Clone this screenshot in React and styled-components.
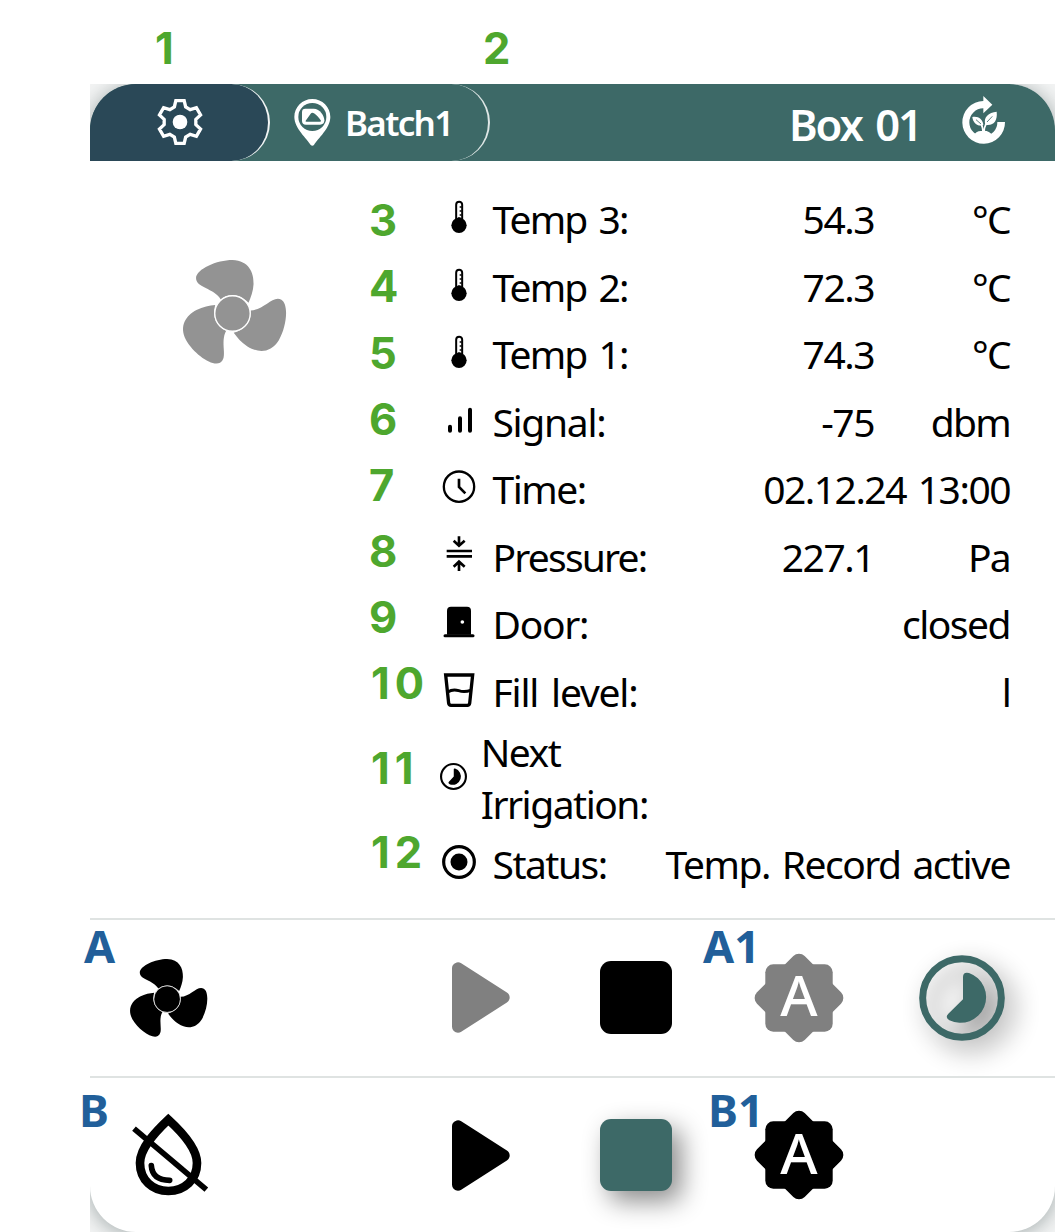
import React from 'react';
import styled, { createGlobalStyle } from 'styled-components';

const TEAL = '#3d6967';

const GlobalStyle = createGlobalStyle`
  *, *::before, *::after { box-sizing: border-box; }
  body {
    margin: 0;
    background: #fff;
    color: #000;
    font-family: "Noto Sans", "Open Sans", sans-serif;
    overflow: hidden;
  }
  svg { display: block; overflow: visible; }
`;

const Page = styled.div`
  position: relative;
  width: 1055px;
  height: 1232px;
  padding: 84px 0 0 90px;
  overflow: hidden;
`;

const Backdrop = styled.div`
  height: 1148px;
  overflow: hidden;
  background: #f3f4f4;
`;

const Card = styled.main`
  display: flex;
  flex-direction: column;
  height: 1148px;
  border-radius: 46px;
  overflow: hidden;
  background: #fff;
  box-shadow: 0 2px 18px 2px rgba(40, 62, 62, 0.34);
`;

const Header = styled.header`
  display: flex;
  flex: none;
  height: 77px;
  background: ${TEAL};
  color: #fff;
`;

const Tabs = styled.div`
  display: flex;
  width: 400px;
  border-right: 2px solid #dfe7e6;
  border-radius: 0 39px 39px 0;
`;

const SettingsTab = styled.div`
  display: flex;
  align-items: center;
  justify-content: center;
  width: 180px;
  padding: 0 0 1px 2px;
  background: #2a4857;
  border-right: 2px solid #f2f5f5;
  border-radius: 0 39px 39px 0;
`;

const BatchTab = styled.div`
  display: flex;
  align-items: center;
  gap: 14px;
  padding-left: 24px;
`;

const BatchName = styled.span`
  padding-top: 1px;
  font-size: 35px;
  font-weight: 600;
  letter-spacing: -1.7px;
  line-height: 48px;
  white-space: nowrap;
`;

const BoxTitle = styled.div`
  display: flex;
  flex: 1;
  align-items: center;
  justify-content: flex-end;
  gap: 41px;
  padding: 0 50px 5px 0;
`;

const BoxName = styled.h1`
  margin: 7px 0 0;
  font-size: 43.5px;
  font-weight: 600;
  letter-spacing: -2px;
  word-spacing: 4px;
  line-height: 60px;
  white-space: nowrap;
`;

const Body = styled.section`
  display: flex;
  flex: none;
  height: 757px;
  padding: 24.5px 45px 0 92.5px;
`;

const FanState = styled.div`
  width: 258.7px;
  padding-top: 74px;
`;

const Readings = styled.div`
  display: flex;
  flex: 1;
  flex-direction: column;
`;

const Reading = styled.div`
  display: flex;
  align-items: center;
  height: ${(p) => (p.$tall ? 105 : 67.5)}px;
  margin-left: ${(p) => (p.$tall ? -1 : 0)}px;
  font-size: 39px;
  line-height: 52.5px;
  white-space: nowrap;
`;

const ReadingIcon = styled.span`
  flex: none;
  margin: 0 ${(p) => (p.$tight ? 13.5 : 15.3)}px 4px 0;
`;

const Label = styled.span`
  flex: 1;
  letter-spacing: ${(p) => p.$track ?? -1.3}px;
  word-spacing: 4px;
  white-space: pre-line;
`;

const Value = styled.span`
  letter-spacing: -1.5px;
  word-spacing: 3.2px;
`;

const Unit = styled.span`
  width: 136px;
  text-align: right;
  letter-spacing: -1.7px;
`;

const Controls = styled.section`
  display: grid;
  flex: none;
  grid-template-columns: 320px 142px 168px 158px 167px;
  align-items: center;
  height: ${(p) => p.$height}px;
  padding-bottom: ${(p) => p.$lift || 0}px;
  border-top: 2px solid #dfe3e2;
`;

const DeviceCell = styled.div`
  padding-left: ${(p) => p.$inset}px;
`;

const ControlCell = styled.div`
  display: flex;
  justify-content: center;
`;

const StopButton = styled.div`
  width: 72.5px;
  height: 72.5px;
  border-radius: 11px;
  background: ${(p) => (p.$active ? TEAL : '#000')};
  box-shadow: ${(p) => (p.$active ? '9px 10px 26px rgba(0, 0, 0, 0.46)' : 'none')};
`;

const TimerButton = styled.div`
  filter: drop-shadow(9px 10px 12px rgba(0, 0, 0, 0.46));
`;

const AutoButton = styled.div`
  display: grid;
  place-items: center;
  width: 90px;
  height: 90px;
  color: ${(p) => (p.$muted ? '#808080' : '#000')};

  > * { grid-area: 1 / 1; }
`;

const AutoLetter = styled.span`
  color: #fff;
  font-size: 57px;
  font-weight: 500;
  line-height: 76px;
  margin-top: -7px;
  z-index: 1;
`;

const Callout = styled.span`
  position: absolute;
  left: ${(p) => p.$x}px;
  top: ${(p) => p.$base - 46}px;
  color: ${(p) => (p.$blue ? '#215f9a' : '#4ea72e')};
  font-family: ${(p) => (p.$blue ? '"Noto Sans"' : 'Inter, "Noto Sans"')}, sans-serif;
  font-size: ${(p) => (p.$blue ? 45 : 43.5)}px;
  font-weight: 700;
  line-height: 60px;
  letter-spacing: ${(p) => (p.$blue ? 0 : 5)}px;
  white-space: nowrap;
  z-index: 2;
`;

const BLADE =
  'M152 161C131 126 78 127 78 97C79 70 140 43 187 43C236 45 251 80 250 115C249 137 242 155 235 171C210 145 177 142 152 161Z';

function Fan({ size, color, ring }) {
  return (
    <svg width={size} height={size} viewBox="39 43 311 311" fill={color}>
      {[0, 120, 240].map((a) => (
        <path key={a} d={BLADE} transform={`rotate(${a} 187 203)`} />
      ))}
      <circle cx="187" cy="203" r="53" stroke="#fff" strokeWidth={ring} />
    </svg>
  );
}

function Gear() {
  const points = [];
  for (let i = 0; i < 6; i += 1) {
    const a = (i * Math.PI) / 3;
    [[-17, -45], [-12.5, -64], [12.5, -64], [17, -45]].forEach(([x, y]) => {
      points.push(`${x * Math.cos(a) - y * Math.sin(a)},${x * Math.sin(a) + y * Math.cos(a)}`);
    });
  }
  return (
    <svg width="48" height="48" viewBox="-72 -72 144 144">
      <polygon points={points.join(' ')} fill="none" stroke="#fff" strokeWidth="10" strokeLinejoin="miter" />
      <circle r="22" fill="#fff" />
    </svg>
  );
}

function BatchPin() {
  return (
    <svg width="37" height="47" viewBox="0 0 111 141">
      <path fill="#fff" d="M55 0C25 0 1 24 1 54C1 88 39 119 50 138Q55 143 60 138C71 119 109 88 109 54C109 24 85 0 55 0Z" />
      <circle cx="55" cy="54" r="42" fill={TEAL} />
      <path fill="#fff" d="M34 29H59C78 29 91 51 91 64Q91 77 78 77H36Q24 77 24 66V39Q24 29 34 29Z" />
      <path fill={TEAL} d="M35 65L50 44Q54 39 60 43C68 48 75 57 81 65Q82 68 77 68H38Q33 68 35 65Z" />
    </svg>
  );
}

function EcoCycle() {
  return (
    <svg width="43" height="48" viewBox="607 75 129 144" fill="#fff">
      <path d="M736 153H713A42 42 0 1 1 671 112V127L698 101L671 75V90A64 64 0 1 0 736 153Z" />
      <path d="M640 196Q650 178 667 180Q684 175 702 195Q690 207 671 207Q652 207 640 196Z" />
      <path d="M638 138C655 134 670 145 671 162C656 168 640 158 638 138Z" />
      <path d="M711 122C714 150 702 165 677 161C670 138 687 124 711 122Z" />
      <path d="M655 150Q669 158 670 182M694 143Q675 155 673 182" fill="none" stroke="#fff" strokeWidth="5" />
      <path d="M649 146L664 159M698 136L682 153" fill="none" stroke={TEAL} strokeWidth="2.5" />
    </svg>
  );
}

const GLYPHS = {
  temp: (
    <>
      <path d="M45.5 62V17A9 9 0 0 1 63.5 17V62" fill="#fff" stroke="#000" strokeWidth="6" />
      <circle cx="54" cy="79" r="23" />
      <path d="M50 55H59V66H50Z" />
      <path d="M56 24H62M56 36H62M56 48H62" stroke="#000" strokeWidth="4" />
    </>
  ),
  signal: (
    <path d="M27 74V86M57 49V86M87 23V86" stroke="#000" strokeWidth="12" strokeLinecap="round" />
  ),
  time: (
    <g fill="none" stroke="#000" strokeWidth="7">
      <circle cx="54" cy="53" r="45.5" />
      <path d="M54 29V54L73 73" strokeWidth="8" />
    </g>
  ),
  pressure: (
    <path
      fill="none"
      stroke="#000"
      strokeWidth="8"
      d="M17 42H93M17 58H93M54 -2V25M38 11L54 26L71 11M54 102V75M38 89L54 74L71 89"
    />
  ),
  door: (
    <>
      <path d="M18 92V20Q18 8 30 8H78Q90 8 90 20V92Z" />
      <path d="M12 95H96" stroke="#000" strokeWidth="9" strokeLinecap="round" />
      <circle cx="64" cy="54" r="5.5" fill="#fff" />
    </>
  ),
  fill: (
    <g fill="none" stroke="#000" strokeWidth="10">
      <path d="M14 9H95L86 94Q85 100 79 100H30Q24 100 23 94Z" />
      <path d="M20 60Q36 50 53 56T89 55" strokeWidth="9" />
    </g>
  ),
  next: (
    <>
      <circle cx="54" cy="54" r="47" fill="none" stroke="#000" strokeWidth="8" />
      <path d="M55 25V54L35 76Q34 82 41 84A31 31 0 1 0 60 24Q55 22 55 27Z" />
    </>
  ),
  status: (
    <>
      <circle cx="54" cy="54" r="46" fill="none" stroke="#000" strokeWidth="9.5" />
      <circle cx="54" cy="54" r="25.5" />
    </>
  ),
};

function Glyph({ name }) {
  const small = name === 'next';
  return (
    <ReadingIcon $tight={small}>
      <svg
        width={small ? 27 : 36}
        height={small ? 27 : 36}
        viewBox={small ? '3 3 102 102' : '0 0 108 108'}
      >
        {GLYPHS[name]}
      </svg>
    </ReadingIcon>
  );
}

function Play({ color }) {
  return (
    <svg width="58" height="71" viewBox="0 0 174 213">
      <path d="M18 19V194L155 106.5Z" fill={color} stroke={color} strokeWidth="36" strokeLinejoin="round" />
    </svg>
  );
}

function Auto({ muted }) {
  return (
    <AutoButton $muted={muted}>
      <svg width="90" height="90" viewBox="-45 -45 90 90" fill="currentColor">
        <rect x="-33.7" y="-33.7" width="67.4" height="67.4" rx="8" />
        <rect x="-33.7" y="-33.7" width="67.4" height="67.4" rx="8" transform="rotate(45)" />
      </svg>
      <AutoLetter>A</AutoLetter>
    </AutoButton>
  );
}

function Timer() {
  return (
    <TimerButton>
      <svg width="86" height="86" viewBox="0 0 258 258" fill={TEAL}>
        <circle cx="129" cy="129" r="118" fill="none" stroke={TEAL} strokeWidth="21" />
        <path d="M132 66Q132 50 150 54A77 77 0 1 1 91 196Q77 186 88 176L132 133Z" />
      </svg>
    </TimerButton>
  );
}

function DropOff() {
  return (
    <svg width="76" height="82" viewBox="160 615 228 246" fill="none" stroke="#000">
      <path d="M266 632C232 664 181 715 181 762C181 813 219 846 266 846C315 846 352 811 352 762C352 717 301 664 266 632Z" strokeWidth="26" />
      <path d="M215 770Q218 814 270 814" strokeWidth="17" strokeLinecap="round" />
      <path d="M163 659L380 842" strokeWidth="17" />
    </svg>
  );
}

const READINGS = [
  { icon: 'temp', label: 'Temp 3:', value: '54.3', unit: '°C', track: -1.9 },
  { icon: 'temp', label: 'Temp 2:', value: '72.3', unit: '°C', track: -1.9 },
  { icon: 'temp', label: 'Temp 1:', value: '74.3', unit: '°C', track: -1.9 },
  { icon: 'signal', label: 'Signal:', value: '-75', unit: 'dbm' },
  { icon: 'time', label: 'Time:', value: '02.12.24 13:00', track: -1.5 },
  { icon: 'pressure', label: 'Pressure:', value: '227.1', unit: 'Pa', track: -1.8 },
  { icon: 'door', label: 'Door:', value: 'closed' },
  { icon: 'fill', label: 'Fill level:', value: '', unit: 'l', track: -1.2 },
  { icon: 'next', label: 'Next\nIrrigation:', value: '', tall: true, track: -1.5 },
  { icon: 'status', label: 'Status:', value: 'Temp. Record active', track: -1.5 },
];

const CALLOUTS = [
  ['1', 155, 64], ['2', 483, 64], ['3', 369, 235.5], ['4', 369, 302],
  ['5', 369, 368.5], ['6', 369, 435], ['7', 369, 501], ['8', 369, 567],
  ['9', 369, 633], ['10', 371, 699], ['11', 371, 784], ['12', 371, 868],
  ['A', 84, 962, true], ['A1', 703, 962, true], ['B', 79, 1126, true], ['B1', 708, 1126, true],
];

export default function App() {
  return (
    <Page>
      <GlobalStyle />
      <Backdrop>
        <Card>
          <Header>
            <Tabs>
              <SettingsTab><Gear /></SettingsTab>
              <BatchTab>
                <BatchPin />
                <BatchName>Batch1</BatchName>
              </BatchTab>
            </Tabs>
            <BoxTitle>
              <BoxName>Box 01</BoxName>
              <EcoCycle />
            </BoxTitle>
          </Header>
          <Body>
            <FanState><Fan size={104} color="#939393" ring={4} /></FanState>
            <Readings>
              {READINGS.map((r) => (
                <Reading key={r.label} $tall={r.tall}>
                  <Glyph name={r.icon} />
                  <Label $track={r.track}>{r.label}</Label>
                  <Value>{r.value}</Value>
                  {r.unit && <Unit>{r.unit}</Unit>}
                </Reading>
              ))}
            </Readings>
          </Body>
          <Controls $height={158} $lift={1}>
            <DeviceCell $inset={40}><Fan size={78} color="#000" ring={3} /></DeviceCell>
            <ControlCell><Play color="#808080" /></ControlCell>
            <ControlCell><StopButton /></ControlCell>
            <ControlCell><Auto muted /></ControlCell>
            <ControlCell><Timer /></ControlCell>
          </Controls>
          <Controls $height={156}>
            <DeviceCell $inset={43}><DropOff /></DeviceCell>
            <ControlCell><Play color="#000" /></ControlCell>
            <ControlCell><StopButton $active /></ControlCell>
            <ControlCell><Auto /></ControlCell>
          </Controls>
        </Card>
      </Backdrop>
      {CALLOUTS.map(([text, x, base, blue]) => (
        <Callout key={text} $x={x} $base={base} $blue={blue}>{text}</Callout>
      ))}
    </Page>
  );
}
